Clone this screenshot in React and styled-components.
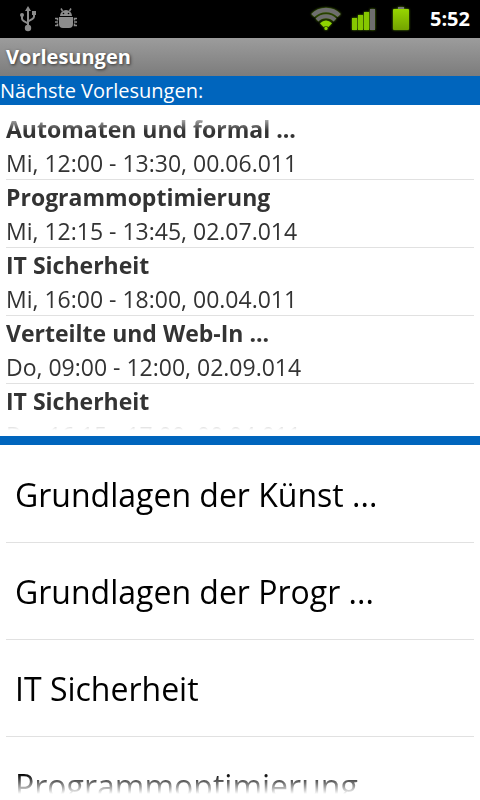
import React from 'react';
import styled, { createGlobalStyle } from 'styled-components';

const Global = createGlobalStyle`
  * { box-sizing: border-box; }
  body { margin: 0; background: #fff; color: #000; font-family: "Open Sans", "Noto Sans", sans-serif; }
`;
const Screen = styled.div`display: flex; flex-direction: column; height: 100vh; overflow: hidden;`;
const StatusBar = styled.div`
  display: flex; align-items: center; justify-content: space-between; flex: none;
  height: 38px; padding: 0 10px 0 19px; background: #000;
`;
const Group = styled.div`display: flex; align-items: center; gap: ${p => p.$gap}px;`;
const Icon = styled.svg`display: block; flex: none; overflow: visible;`;
const LitIcon = styled(Icon)`filter: drop-shadow(0 0 1px #5f9a00);`;
const Clock = styled.time`padding-left: 4px; color: #fff; font-size: 20px; font-weight: 700; line-height: 38px;`;
const TitleBar = styled.h1`
  flex: none; height: 38px; margin: 0; padding: 0 6px; line-height: 38px; font-size: 20px; font-weight: 700;
  color: #fff; background: linear-gradient(#9c9c9c, #7c7c7c); text-shadow: 1px 1px 3px #333;
`;
const Section = styled.h2`
  flex: none; height: 29px; margin: 0; line-height: 30px; font-size: 20px; font-weight: 400;
  color: #fff; background: #0065bd;
`;
const Panel = styled.section`
  display: flex; flex-direction: column; padding: 6px; min-height: 0;
  flex: ${p => (p.$grow ? '1' : 'none')};
  height: ${p => (p.$grow ? 'auto' : '331px')};
`;
const List = styled.ul`
  flex: 1; min-height: 0; margin: 0; padding: ${p => (p.$fadeTop ? 1 : 0)}px 0 0; list-style: none; overflow: hidden;
  mask-image: linear-gradient(${p => (p.$fadeTop ? 'transparent, #000 20px' : '#000')}, #000 calc(100% - 20px), transparent);
`;
const Lecture = styled.li`
  height: 68px; border-bottom: 1px solid #e1e1e1; color: #333; font-size: 23px; line-height: 34px; white-space: nowrap;
`;
const Name = styled.strong`display: block;`;
const Divider = styled.div`flex: none; height: 9px; background: #0065bd;`;
const Course = styled.li`
  height: 97px; padding-left: 9px; border-bottom: 1px solid #e1e1e1; font-size: 32px; line-height: 88px; white-space: nowrap;
  & + & { line-height: 98px; }
  &:first-child { height: 92px; }
`;

const Usb = () => (
  <Icon width="18" height="26" viewBox="0 0 18 26" fill="#8c8c8c" role="img" aria-label="USB">
    <path d="M9 0l3 5h-2v16H8V5H6z" />
    <path d="M3 9v3.500q0 1.500 1.500 2.300L9 17.500M15 8v2.500q0 1.500-1.500 2.300L9 15.500" fill="none" stroke="#8c8c8c" strokeWidth="2" />
    <circle cx="3" cy="9" r="2" /><path d="M13 5h4v4h-4z" /><circle cx="9" cy="22" r="3.200" />
  </Icon>
);
const Debug = () => (
  <Icon width="22" height="22" viewBox="0 0 22 22" fill="#8c8c8c" role="img" aria-label="USB-Debugging">
    <path d="M5 8a6 6 0 0 1 12 0zM4 9h14v7q0 4-4 4H8q-4 0-4-4z" />
    <path d="M7.500 3L6 .5M14.500 3L16 .5M0 10.500h2.500v2M0 14h3M2.500 15.500v2H0M22 10.500h-2.500v2M22 14h-3M19.500 15.500v2H22" fill="none" stroke="#8c8c8c" strokeWidth="1.500" />
    <circle cx="8.500" cy="5.500" r=".8" fill="#000" /><circle cx="13.500" cy="5.500" r=".8" fill="#000" />
  </Icon>
);
const Wifi = () => (
  <LitIcon width="30" height="22" viewBox="0 0 30 22" fill="none" role="img" aria-label="WLAN">
    <path d="M1.800 7.500a18.600 18.600 0 0 1 26.400 0" stroke="#6e6e6e" strokeWidth="4.500" />
    <path d="M6 12a12.600 12.600 0 0 1 18 0" stroke="#6e6e6e" strokeWidth="4" />
    <path d="M9 15.200Q15 9.800 21 15.200L17.400 19Q15 17 12.600 19z" fill="#8fd400" />
    <circle cx="15" cy="20.400" r="1.600" fill="#8fd400" />
  </LitIcon>
);
const Signal = () => (
  <LitIcon width="25" height="22" viewBox="0 0 25 22" fill="#86c800" role="img" aria-label="Mobilfunksignal">
    <path d="M1 10h5v12H1zM7 7h5v15H7zM13 4h5v18h-5z" /><path d="M19 1h5v21h-5z" fill="#6e6e6e" />
  </LitIcon>
);
const Battery = () => (
  <LitIcon width="18" height="24" viewBox="0 0 18 24" role="img" aria-label="Akku">
    <defs><linearGradient id="charge" x2="0" y2="1"><stop stopColor="#96d600" /><stop offset="1" stopColor="#74a300" /></linearGradient></defs>
    <path d="M6 0h6v2H6z" fill="#777" />
    <rect x="1" y="2" width="16" height="21" rx="1" fill="url(#charge)" />
  </LitIcon>
);

const lectures = [
  ['Automaten und formal ...', 'Mi, 12:00 - 13:30, 00.06.011'],
  ['Programmoptimierung', 'Mi, 12:15 - 13:45, 02.07.014'],
  ['IT Sicherheit', 'Mi, 16:00 - 18:00, 00.04.011'],
  ['Verteilte und Web-In ...', 'Do, 09:00 - 12:00, 02.09.014'],
  ['IT Sicherheit', 'Do, 16:15 - 17:00, 00.04.011'],
];
const courses = ['Grundlagen der Künst ...', 'Grundlagen der Progr ...', 'IT Sicherheit', 'Programmoptimierung'];

export default function App() {
  return (
    <Screen>
      <Global />
      <StatusBar>
        <Group $gap={18}><Usb /><Debug /></Group>
        <Group $gap={16}>
          <Group $gap={10}><Wifi /><Signal /></Group>
          <Battery />
          <Clock>5:52</Clock>
        </Group>
      </StatusBar>
      <TitleBar>Vorlesungen</TitleBar>
      <Section>Nächste Vorlesungen:</Section>
      <Panel>
        <List $fadeTop>{lectures.map(([n, t]) => <Lecture key={t + n}><Name>{n}</Name>{t}</Lecture>)}</List>
      </Panel>
      <Divider />
      <Panel $grow>
        <List>{courses.map(c => <Course key={c}>{c}</Course>)}</List>
      </Panel>
    </Screen>
  );
}
